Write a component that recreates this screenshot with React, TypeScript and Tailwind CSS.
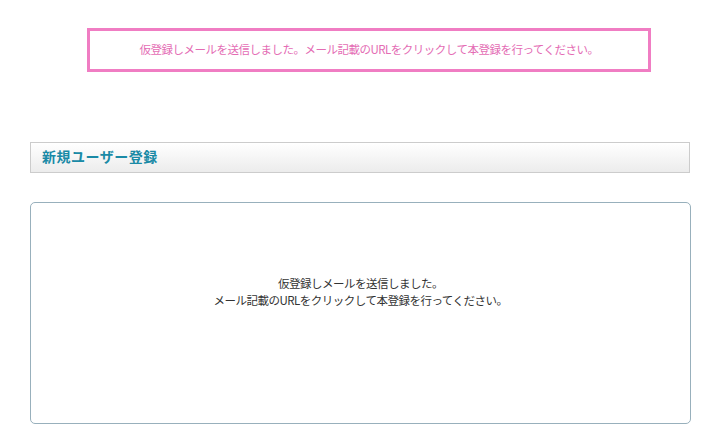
export default function App() {
  const font = { fontFamily: '"MS PGothic", "Noto Sans CJK JP", sans-serif' };
  return (
    <div className="w-[710px] h-[439px] bg-white overflow-hidden" style={font}>
      <div className="pt-[28px] pl-[87px]">
        <div className="w-[564px] h-[44px] border-[3px] border-[#f07dc3] flex items-center justify-center text-[11.5px] text-[#e46cb4] tracking-[-0.5px]">
          仮登録しメールを送信しました。メール記載のURLをクリックして本登録を行ってください。
        </div>
      </div>
      <div className="pl-[30px] mt-[70px]">
        <div className="w-[660px] h-[31px] border border-[#cccccc] bg-gradient-to-b from-white to-[#ececec] flex items-center pl-[11px] pb-[3px] text-[14px] font-bold text-[#1a8aa6] tracking-[0.5px]">
          新規ユーザー登録
        </div>
        <div className="mt-[29px] w-[661px] h-[222px] border border-[#98b0bc] rounded-[5px] flex flex-col items-center pt-[72px] text-[11.5px] text-[#333] leading-[17px] tracking-[-0.5px]">
          <div>仮登録しメールを送信しました。</div>
          <div>メール記載のURLをクリックして本登録を行ってください。</div>
        </div>
      </div>
    </div>
  );
}
